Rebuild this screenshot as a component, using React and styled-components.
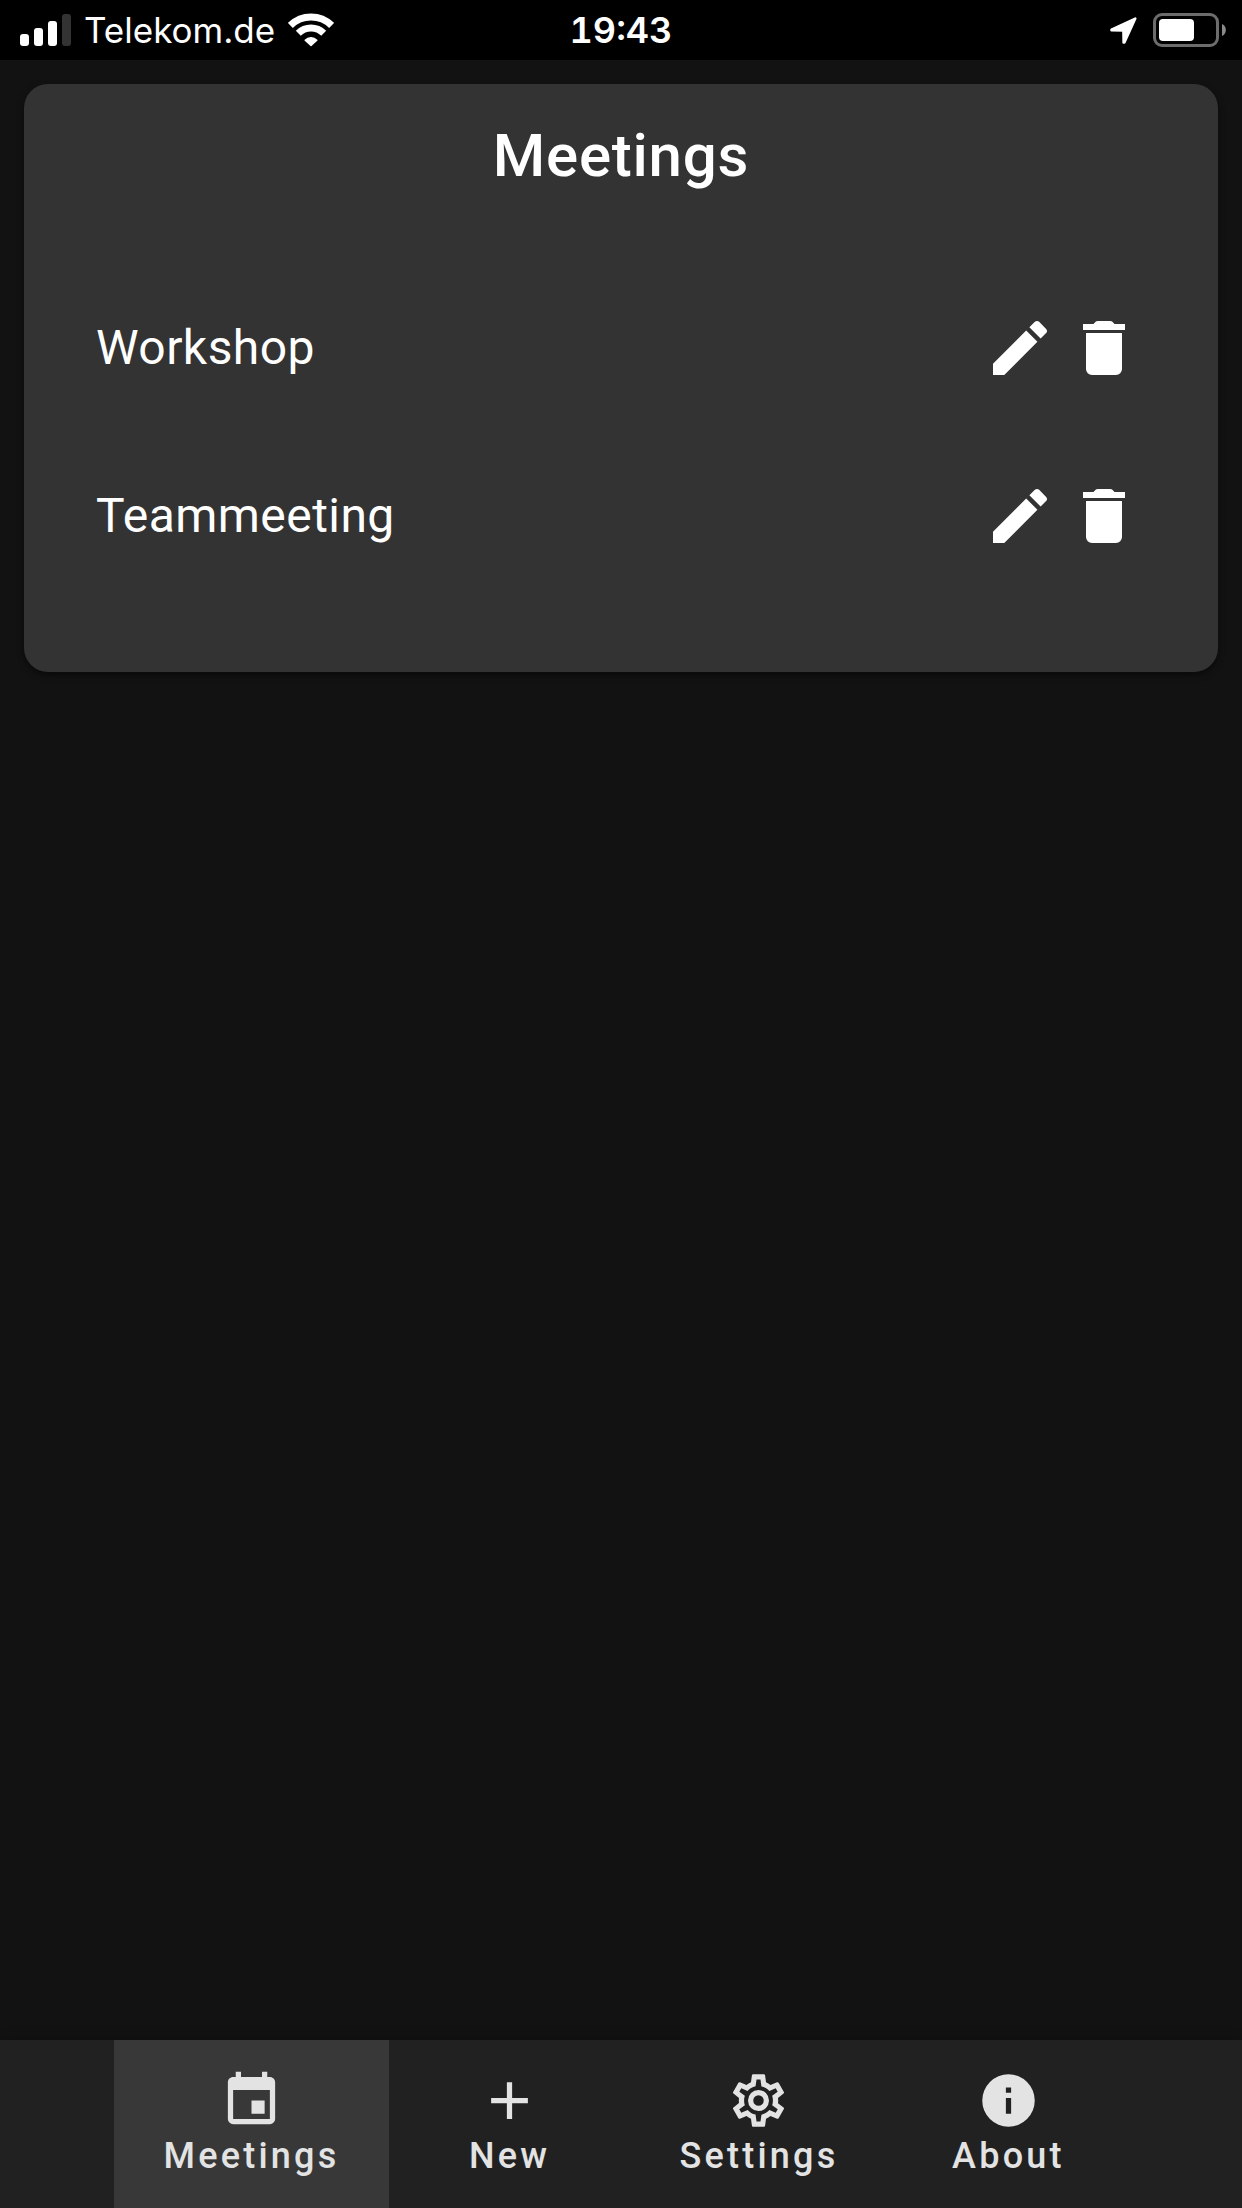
import React from "react";
import styled, { createGlobalStyle } from "styled-components";

const GlobalStyle = createGlobalStyle`
  *, *::before, *::after { box-sizing: border-box; }
  body {
    margin: 0;
    background: #121212;
    color: #ffffff;
    font-family: Roboto, "Liberation Sans", sans-serif;
  }
`;

const Page = styled.div`
  display: flex;
  flex-direction: column;
  min-height: 100vh;
`;

const StatusBar = styled.header`
  display: grid;
  grid-template-columns: 1fr auto 1fr;
  align-items: center;
  height: 60px;
  padding: 0 16px;
  background: #000000;
  font-family: Inter, "Liberation Sans", sans-serif;
  font-size: 36px;
  line-height: 60px;
`;

const StatusGroup = styled.div`
  display: flex;
  align-items: center;
  justify-content: ${({ $end }) => ($end ? "flex-end" : "flex-start")};
  gap: ${({ $end }) => ($end ? "16px" : "13px")};
  padding-left: 4px;

  svg { flex: none; display: block; }
`;

const Carrier = styled.span`
  font-size: 35px;
`;

const Clock = styled.time`
  font-weight: 600;
  font-variant-numeric: tabular-nums;
`;

const Main = styled.main`
  flex: 1;
  padding: 24px;
`;

const Card = styled.section`
  padding: 24px 24px 72px;
  border-radius: 24px;
  background: #333333;
  box-shadow: 0 3px 6px rgba(0, 0, 0, 0.5);
`;

const CardTitle = styled.h1`
  margin: 0 0 60px;
  font-size: 60px;
  font-weight: 500;
  line-height: 96px;
  letter-spacing: 0.0125em;
  text-align: center;
`;

const MeetingList = styled.ul`
  margin: 0;
  padding: 0;
  list-style: none;
`;

const MeetingRow = styled.li`
  display: flex;
  align-items: center;
  height: 168px;
  padding: 0 48px;
`;

const MeetingName = styled.span`
  flex: 1;
  font-size: 48px;
  line-height: 72px;
  letter-spacing: 0.009375em;
`;

const IconButton = styled.button`
  display: flex;
  padding: 6px;
  border: 0;
  background: none;
  color: inherit;
  cursor: pointer;
`;

const Icon = styled.svg`
  display: block;
  width: ${({ $size }) => $size}px;
  height: ${({ $size }) => $size}px;
  fill: currentColor;
`;

const BottomNav = styled.nav`
  position: sticky;
  bottom: 0;
  display: flex;
  justify-content: center;
  height: 168px;
  background: #212121;
  box-shadow: 0 0 12px rgba(0, 0, 0, 0.25);
`;

const NavLink = styled.a`
  display: flex;
  flex-direction: column;
  align-items: center;
  justify-content: center;
  min-width: 240px;
  padding: 0 50px;
  background: ${({ $active }) => ($active ? "#383838" : "transparent")};
  color: #e3e3e3;
  font-size: 36px;
  font-weight: 500;
  line-height: 48px;
  letter-spacing: 0.0892857143em;
  text-decoration: none;
`;

const paths = {
  pencil:
    "M20.71,7.04C21.1,6.65 21.1,6 20.71,5.63L18.37,3.29C18,2.9 17.35,2.9 16.96,3.29L15.12,5.12L18.87,8.87M3,17.25V21H6.75L17.81,9.93L14.06,6.18L3,17.25Z",
  trash:
    "M19,4H15.5L14.79,3.29C14.61,3.11 14.35,3 14.09,3H9.91C9.65,3 9.39,3.11 9.21,3.29L8.5,4H5V6H19M6,19A2,2 0 0,0 8,21H16A2,2 0 0,0 18,19V7H6V19Z",
  calendar:
    "M19,19H5V8H19M16,1V3H8V1H6V3H5C3.89,3 3,3.89 3,5V19A2,2 0 0,0 5,21H19A2,2 0 0,0 21,19V5C21,3.89 20.1,3 19,3H18V1M17,12H12V17H17V12Z",
  plus: "M19,13H13V19H11V13H5V11H11V5H13V11H19V13Z",
  cog:
    "M12,8A4,4 0 0,1 16,12A4,4 0 0,1 12,16A4,4 0 0,1 8,12A4,4 0 0,1 12,8M12,10A2,2 0 0,0 10,12A2,2 0 0,0 12,14A2,2 0 0,0 14,12A2,2 0 0,0 12,10M10,22C9.75,22 9.54,21.82 9.5,21.58L9.13,18.93C8.5,18.68 7.96,18.34 7.44,17.94L4.95,18.95C4.73,19.03 4.46,18.95 4.34,18.73L2.34,15.27C2.21,15.05 2.27,14.78 2.46,14.63L4.57,12.97L4.5,12L4.57,11L2.46,9.37C2.27,9.22 2.21,8.95 2.34,8.73L4.34,5.27C4.46,5.05 4.73,4.96 4.95,5.05L7.44,6.05C7.96,5.66 8.5,5.32 9.13,5.07L9.5,2.42C9.54,2.18 9.75,2 10,2H14C14.25,2 14.46,2.18 14.5,2.42L14.87,5.07C15.5,5.32 16.04,5.66 16.56,6.05L19.05,5.05C19.27,4.96 19.54,5.05 19.66,5.27L21.66,8.73C21.79,8.95 21.73,9.22 21.54,9.37L19.43,11L19.5,12L19.43,13L21.54,14.63C21.73,14.78 21.79,15.05 21.66,15.27L19.66,18.73C19.54,18.95 19.27,19.04 19.05,18.95L16.56,17.95C16.04,18.34 15.5,18.68 14.87,18.93L14.5,21.58C14.46,21.82 14.25,22 14,22H10M11.25,4L10.88,6.61C9.68,6.86 8.62,7.5 7.85,8.39L5.44,7.35L4.69,8.65L6.8,10.2C6.4,11.37 6.4,12.64 6.8,13.8L4.68,15.36L5.43,16.66L7.86,15.62C8.63,16.5 9.68,17.14 10.87,17.38L11.24,20H12.76L13.13,17.39C14.32,17.14 15.37,16.5 16.14,15.62L18.57,16.66L19.32,15.36L17.2,13.81C17.6,12.64 17.6,11.37 17.2,10.2L19.31,8.65L18.56,7.35L16.15,8.39C15.38,7.5 14.32,6.86 13.12,6.62L12.75,4H11.25Z",
  info:
    "M13,9H11V7H13M13,17H11V11H13M12,2A10,10 0 0,0 2,12A10,10 0 0,0 12,22A10,10 0 0,0 22,12A10,10 0 0,0 12,2Z",
};

function Glyph({ name, size }) {
  return (
    <Icon $size={size} viewBox="0 0 24 24" aria-hidden="true">
      <path d={paths[name]} />
    </Icon>
  );
}

function SignalIcon() {
  return (
    <svg width="51" height="32" viewBox="0 0 51 32" fill="#fff" aria-hidden="true">
      <rect x="0" y="20" width="9" height="12" rx="3" />
      <rect x="14" y="14" width="9" height="18" rx="3" />
      <rect x="28" y="7" width="9" height="25" rx="3" />
      <rect x="42" y="0" width="9" height="32" rx="3" fill="#333" />
    </svg>
  );
}

function WifiIcon() {
  return (
    <svg width="46" height="34" viewBox="0 0 46 34" fill="none" stroke="#fff" strokeWidth="7" aria-hidden="true">
      <path d="M2.4 12.4A29.5 29.5 0 0 1 43.6 12.4" />
      <path d="M10.3 20.3A18 18 0 0 1 35.7 20.3" />
      <path
        d="M17.2 27.2A8.3 8.3 0 0 1 28.8 27.2L23 32.4Z"
        fill="#fff"
        strokeWidth="1.5"
        strokeLinejoin="round"
      />
    </svg>
  );
}

function LocationIcon() {
  return (
    <svg width="27" height="27" viewBox="0 0 27 27" fill="#fff" stroke="#fff" strokeWidth="2.5" strokeLinejoin="round" aria-hidden="true">
      <path d="M1.5 12.6L25.3 1.6L14.4 25.4L13.6 25.4L13.4 13.4L1.5 13.2Z" />
    </svg>
  );
}

function BatteryIcon() {
  return (
    <svg width="73" height="34" viewBox="0 0 73 34" aria-hidden="true">
      <rect x="1.5" y="1.5" width="63" height="31" rx="7.5" fill="none" stroke="#6c6c6c" strokeWidth="3" />
      <rect x="6" y="6" width="35" height="22" rx="4" fill="#fff" />
      <path d="M69 11C74.2 13.2 74.2 20.8 69 23Z" fill="#8a8a8a" />
    </svg>
  );
}

const meetings = ["Workshop", "Teammeeting"];

const tabs = [
  { label: "Meetings", icon: "calendar", href: "#meetings" },
  { label: "New", icon: "plus", href: "#new" },
  { label: "Settings", icon: "cog", href: "#settings" },
  { label: "About", icon: "info", href: "#about" },
];

export default function App() {
  const current = "Meetings";
  return (
    <Page>
      <GlobalStyle />
      <StatusBar>
        <StatusGroup>
          <SignalIcon />
          <Carrier>Telekom.de</Carrier>
          <WifiIcon />
        </StatusGroup>
        <Clock>19:43</Clock>
        <StatusGroup $end>
          <LocationIcon />
          <BatteryIcon />
        </StatusGroup>
      </StatusBar>
      <Main>
        <Card>
          <CardTitle>Meetings</CardTitle>
          <MeetingList>
            {meetings.map((name) => (
              <MeetingRow key={name}>
                <MeetingName>{name}</MeetingName>
                <IconButton type="button" aria-label={`Edit ${name}`}>
                  <Glyph name="pencil" size={72} />
                </IconButton>
                <IconButton type="button" aria-label={`Delete ${name}`}>
                  <Glyph name="trash" size={72} />
                </IconButton>
              </MeetingRow>
            ))}
          </MeetingList>
        </Card>
      </Main>
      <BottomNav>
        {tabs.map(({ label, icon, href }) => (
          <NavLink
            key={label}
            href={href}
            $active={label === current}
            aria-current={label === current ? "page" : undefined}
          >
            <Glyph name={icon} size={63} />
            <span>{label}</span>
          </NavLink>
        ))}
      </BottomNav>
    </Page>
  );
}
